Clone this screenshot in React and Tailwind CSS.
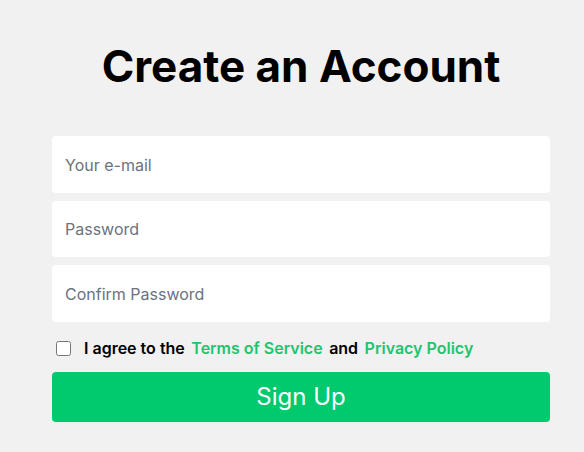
import React, { useState } from 'react'

const App = () => {
  const [agreed, setAgreed] = useState(false)

  return (
    <div className="min-h-[452px] w-full bg-[#f1f1f1] font-['Inter',sans-serif]">
      <div className="ml-[52px] w-[498px] pt-[38px]">
        <h1 className="text-center text-[44px] font-bold leading-[56px] text-black">Create an Account</h1>

        <form className="mt-[42px] flex flex-col gap-[8px]" onSubmit={(e) => e.preventDefault()}>
          <input
            type="email"
            placeholder="Your e-mail"
            className="h-[57px] rounded-[4px] bg-white px-[13px] text-[16px] text-gray-800 outline-none placeholder:text-[#6b7280]"
          />
          <input
            type="password"
            placeholder="Password"
            className="h-[56px] rounded-[4px] bg-white px-[13px] text-[16px] text-gray-800 outline-none placeholder:text-[#6b7280]"
          />
          <input
            type="password"
            placeholder="Confirm Password"
            className="h-[57px] rounded-[4px] bg-white px-[13px] text-[16px] text-gray-800 outline-none placeholder:text-[#6b7280]"
          />

          <label className="mt-[6px] flex items-center gap-[13px] pl-[4px] text-[16px] font-semibold text-black">
            <input
              type="checkbox"
              checked={agreed}
              onChange={() => setAgreed(!agreed)}
              className="h-[15px] w-[15px]"
            />
            <span className="flex items-center gap-[6.5px]">
              <span>I agree to the</span>
              <a href="#" className="text-[#1fc46f]">Terms of Service</a>
              <span>and</span>
              <a href="#" className="text-[#1fc46f]">Privacy Policy</a>
            </span>
          </label>

          <button
            type="submit"
            className="mt-[4px] h-[50px] rounded-[4px] bg-[#00c96e] text-[24px] font-normal text-white"
          >
            Sign Up
          </button>
        </form>
      </div>
    </div>
  )
}

export default App
